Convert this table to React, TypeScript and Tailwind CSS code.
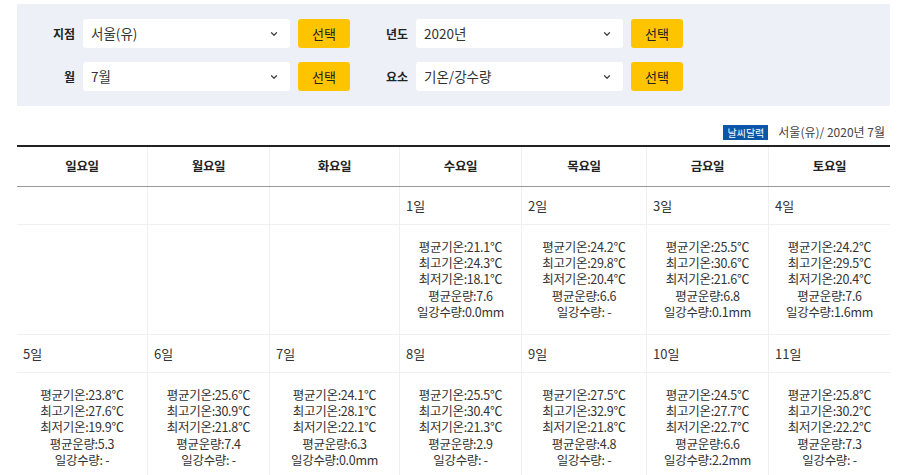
import { ChevronDown } from 'lucide-react';

type Day = {
  date: number;
  avg: string;
  max: string;
  min: string;
  cloud: string;
  rain: string;
};

const DAYS: Day[] = [
  { date: 1, avg: '21.1', max: '24.3', min: '18.1', cloud: '7.6', rain: '0.0mm' },
  { date: 2, avg: '24.2', max: '29.8', min: '20.4', cloud: '6.6', rain: ' -' },
  { date: 3, avg: '25.5', max: '30.6', min: '21.6', cloud: '6.8', rain: '0.1mm' },
  { date: 4, avg: '24.2', max: '29.5', min: '20.4', cloud: '7.6', rain: '1.6mm' },
  { date: 5, avg: '23.8', max: '27.6', min: '19.9', cloud: '5.3', rain: ' -' },
  { date: 6, avg: '25.6', max: '30.9', min: '21.8', cloud: '7.4', rain: ' -' },
  { date: 7, avg: '24.1', max: '28.1', min: '22.1', cloud: '6.3', rain: '0.0mm' },
  { date: 8, avg: '25.5', max: '30.4', min: '21.3', cloud: '2.9', rain: ' -' },
  { date: 9, avg: '27.5', max: '32.9', min: '21.8', cloud: '4.8', rain: ' -' },
  { date: 10, avg: '24.5', max: '27.7', min: '22.7', cloud: '6.6', rain: '2.2mm' },
  { date: 11, avg: '25.8', max: '30.2', min: '22.2', cloud: '7.3', rain: ' -' },
];

const WEEKDAYS = ['일요일', '월요일', '화요일', '수요일', '목요일', '금요일', '토요일'];

// July 2020 starts on Wednesday
const WEEKS: (Day | null)[][] = [
  [null, null, null, DAYS[0], DAYS[1], DAYS[2], DAYS[3]],
  [DAYS[4], DAYS[5], DAYS[6], DAYS[7], DAYS[8], DAYS[9], DAYS[10]],
];

const GRID = 'grid grid-cols-[131px_122px_130px_122px_125px_122px_121px]';

const FilterField = ({ label, value }: { label: string; value: string }) => (
  <div className="flex items-center">
    <span className="w-[66px] pr-[8px] text-right text-[12px] font-bold text-[#222]">
      {label}
    </span>
    <div className="flex h-[29px] w-[207px] items-center justify-between rounded-[3px] bg-white pl-[8px] pr-[11px] text-[13.5px] text-[#333]">
      <span>{value}</span>
      <ChevronDown className="h-[10px] w-[10px] text-[#444]" strokeWidth={3} />
    </div>
    <button className="ml-[8px] h-[29px] w-[52px] rounded-[3px] bg-[#ffc400] text-[13px] text-[#222]">
      선택
    </button>
  </div>
);

const DayCells = ({ week }: { week: (Day | null)[] }) => (
  <>
    <div className={`${GRID} border-b border-[#eef0f4]`}>
      {week.map((d, i) => (
        <div
          key={i}
          className={`flex h-[37px] items-center pl-[6px] text-[13px] text-[#333] ${
            i < 6 ? 'border-r border-[#eef0f4]' : ''
          }`}
        >
          {d ? `${d.date}일` : ''}
        </div>
      ))}
    </div>
    <div className={`${GRID} border-b border-[#eef0f4]`}>
      {week.map((d, i) => (
        <div
          key={i}
          className={`h-[109px] pt-[14px] text-center text-[12.5px] leading-[16.2px] tracking-[-0.3px] text-[#333] ${
            i < 6 ? 'border-r border-[#eef0f4]' : ''
          }`}
        >
          {d && (
            <>
              <div>평균기온:{d.avg}℃</div>
              <div>최고기온:{d.max}℃</div>
              <div>최저기온:{d.min}℃</div>
              <div>평균운량:{d.cloud}</div>
              <div>일강수량:{d.rain}</div>
            </>
          )}
        </div>
      ))}
    </div>
  </>
);

export default function App() {
  return (
    <div
      className="min-h-screen bg-white px-[17px] pt-[4px]"
      style={{ fontFamily: '"Noto Sans CJK KR", "Noto Sans", sans-serif' }}
    >
      {/* Filters */}
      <div className="flex w-[873px] flex-col gap-[14px] bg-[#edf1f7] py-[15px]">
        <div className="flex">
          <FilterField label="지점" value="서울(유)" />
          <FilterField label="년도" value="2020년" />
        </div>
        <div className="flex">
          <FilterField label="월" value="7월" />
          <FilterField label="요소" value="기온/강수량" />
        </div>
      </div>

      {/* Caption */}
      <div className="mt-[18px] flex h-[16px] w-[873px] items-center justify-end gap-[10px] pr-[5px]">
        <span className="bg-[#0b56a6] px-[4px] text-[10px] leading-[15px] text-white">
          날씨달력
        </span>
        <span className="text-[12px] text-[#444]">서울(유)/ 2020년 7월</span>
      </div>

      {/* Calendar */}
      <div className="mt-[5px] w-[873px] border-t-2 border-[#222]">
        <div className={`${GRID} border-b border-[#999]`}>
          {WEEKDAYS.map((w, i) => (
            <div
              key={w}
              className={`flex h-[39px] items-center justify-center text-[12.5px] font-bold tracking-[-0.3px] text-[#222] ${
                i < 6 ? 'border-r border-[#eef0f4]' : ''
              }`}
            >
              {w}
            </div>
          ))}
        </div>
        {WEEKS.map((week, i) => (
          <DayCells key={i} week={week} />
        ))}
      </div>
    </div>
  );
}
